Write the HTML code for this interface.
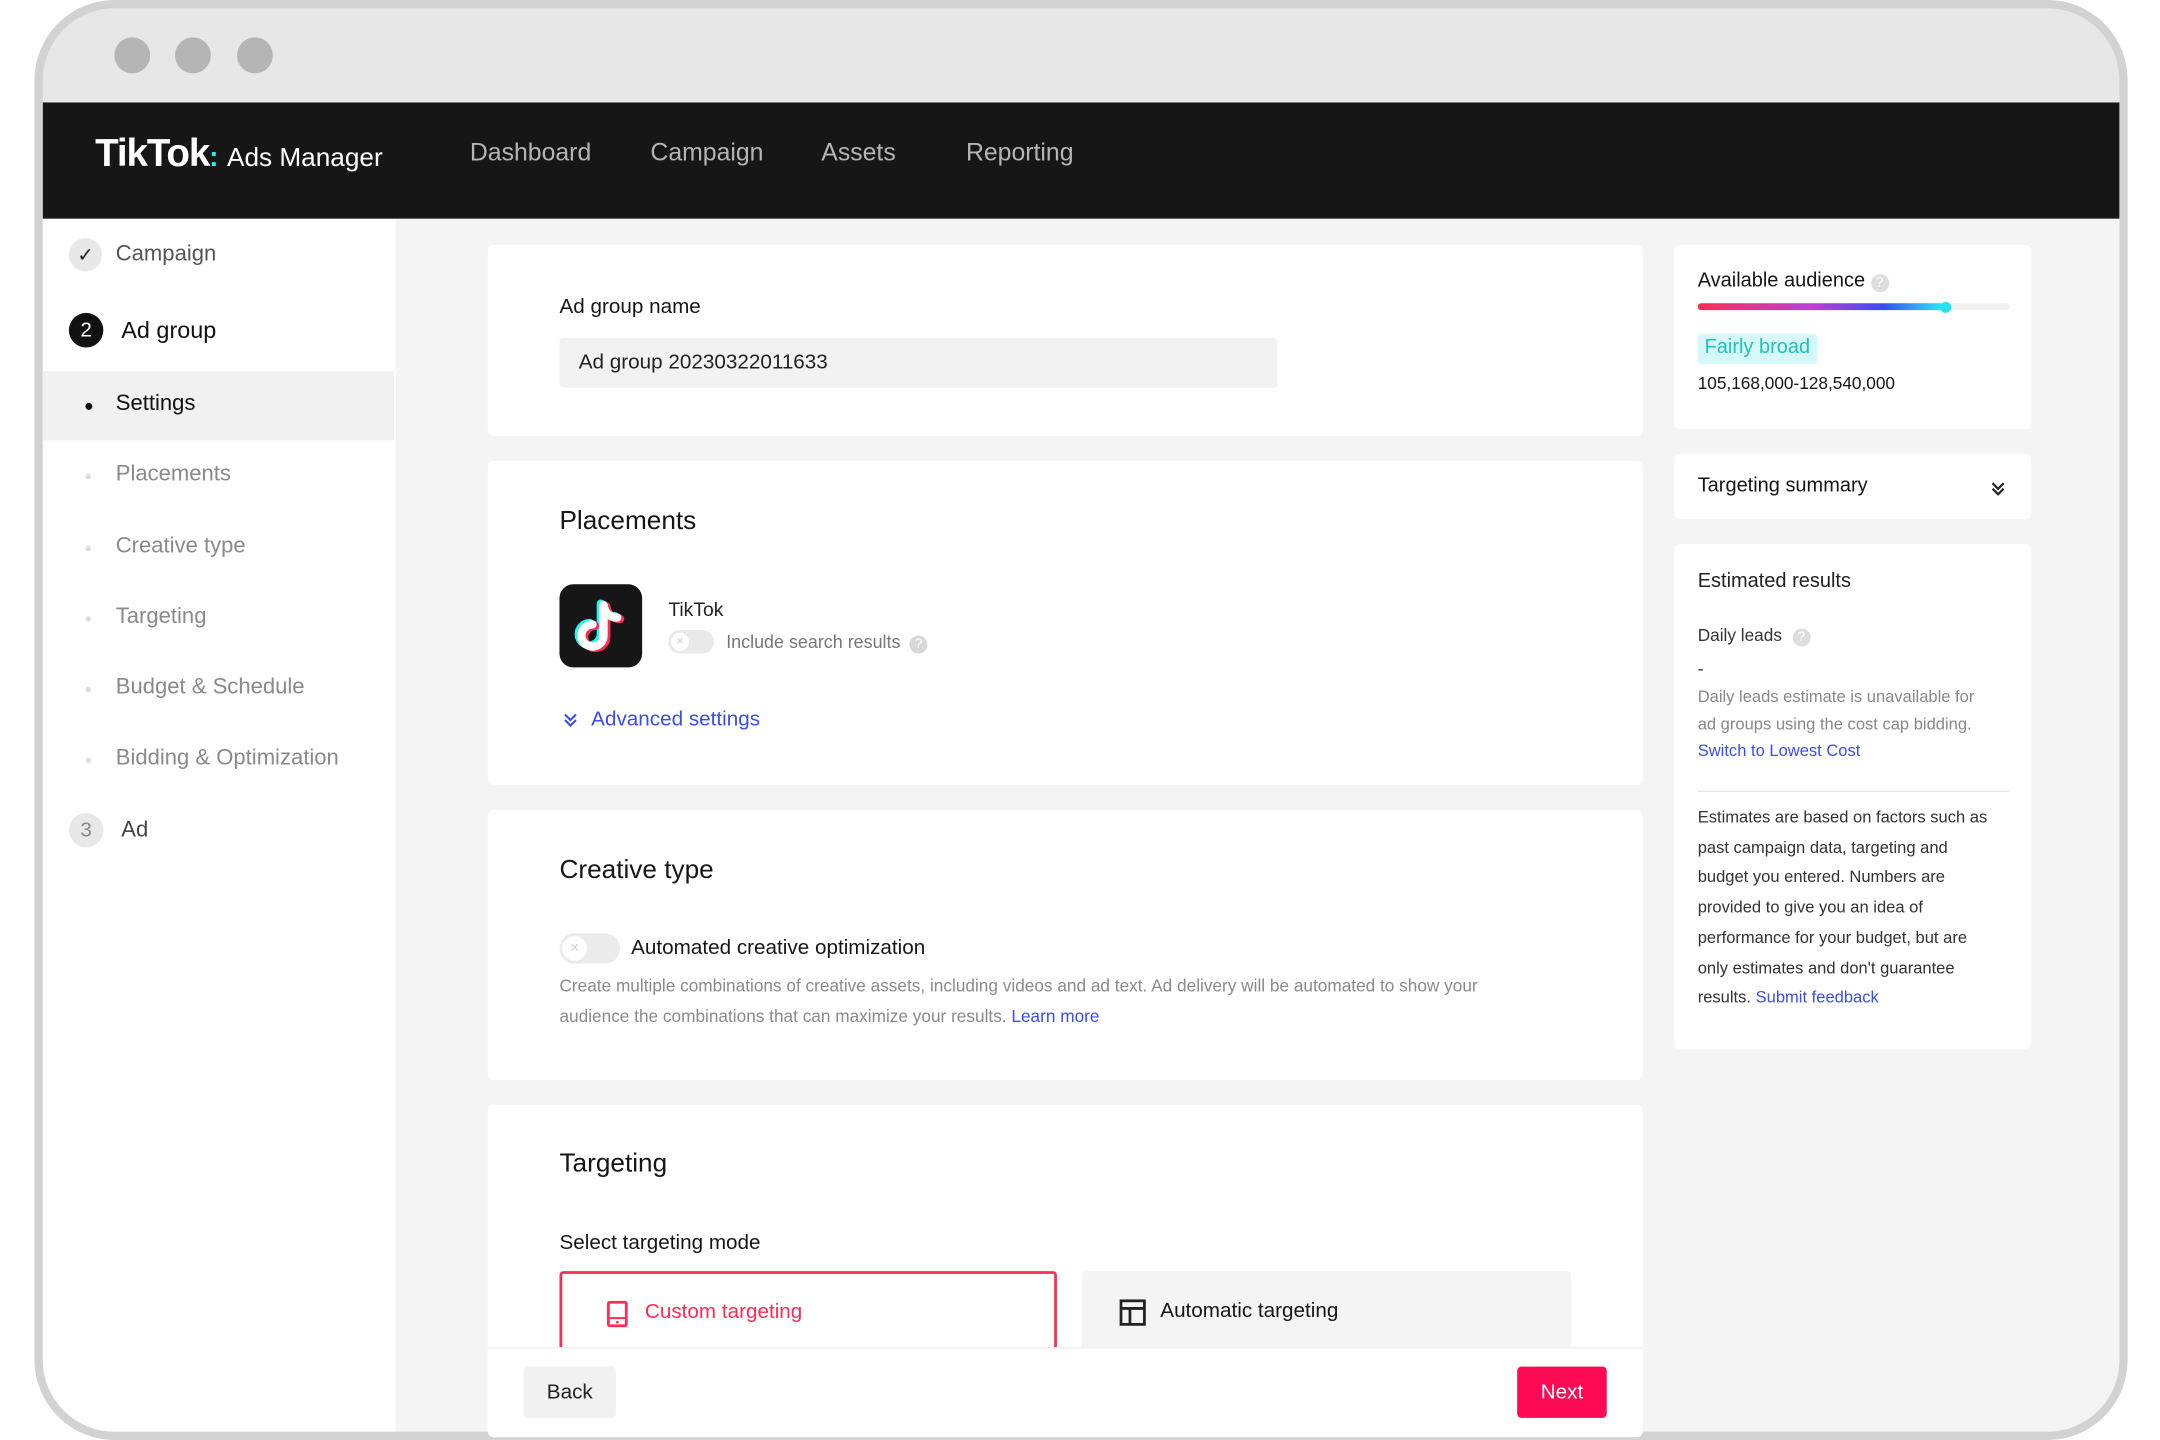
<!DOCTYPE html>
<html><head><meta charset="utf-8"><style>
*{box-sizing:border-box;margin:0;padding:0}
body{width:2160px;height:1440px;overflow:hidden;background:#fff;font-family:"Liberation Sans",sans-serif;}
#w{position:absolute;left:0;top:0;width:1568px;height:1040px;transform:scale(1.378,1.3846);transform-origin:0 0;}
.a{position:absolute;white-space:nowrap}
.card{position:absolute;background:#fff;border-radius:4px}
.nav{position:absolute;top:100px;color:#b5b5b5;font-size:18px}
.si{position:absolute;left:84px;font-size:16px;color:#8a8a8a}
.dot{position:absolute;left:62px;width:4px;height:4px;border-radius:2px;background:#ddd}
</style></head><body><div id="w">
<div class="a" style="left:25px;top:0;width:1519px;height:1040px;border:6px solid #d2d2d2;border-radius:58px;background:#e7e7e7;overflow:hidden">
 <div class="a" style="left:0;top:68px;width:1510px;height:84px;background:#161616"></div>
 <div class="a" style="left:0;top:152px;width:256px;height:900px;background:#fff"></div>
 <div class="a" style="left:256px;top:152px;width:1260px;height:900px;background:#f4f4f4"></div>
</div>
<div class="a" style="left:83px;top:27px;width:26px;height:26px;border-radius:13px;background:#b5b5b5"></div>
<div class="a" style="left:127px;top:27px;width:26px;height:26px;border-radius:13px;background:#b5b5b5"></div>
<div class="a" style="left:172px;top:27px;width:26px;height:26px;border-radius:13px;background:#b5b5b5"></div>
<div class="a" style="left:69px;top:95px;color:#fff;font-size:28px;font-weight:bold;letter-spacing:-0.8px">TikTok<span style="color:#25f4ee;font-size:20px">:</span> <span style="font-weight:normal;font-size:19px;letter-spacing:0">Ads Manager</span></div>
<div class="nav" style="left:341px">Dashboard</div>
<div class="nav" style="left:472px">Campaign</div>
<div class="nav" style="left:596px">Assets</div>
<div class="nav" style="left:701px">Reporting</div>
<div class="a" style="left:50px;top:172px;width:24px;height:24px;border-radius:12px;background:#e8e8e8;font-size:14px;text-align:center;line-height:24px;color:#222">✓</div>
<div class="si" style="top:175px;color:#555">Campaign</div>
<div class="a" style="left:50px;top:226px;width:25px;height:25px;border-radius:13px;background:#111;color:#fff;font-size:15px;text-align:center;line-height:25px">2</div>
<div class="si" style="left:88px;top:229px;color:#111;font-size:17px">Ad group</div>
<div class="a" style="left:31px;top:268px;width:255px;height:50px;background:#f1f1f1"></div>
<div class="a" style="left:62px;top:291px;width:5px;height:5px;border-radius:3px;background:#111"></div>
<div class="si" style="top:283px;color:#111">Settings</div>
<div class="dot" style="top:342px"></div><div class="si" style="top:334px">Placements</div>
<div class="dot" style="top:394px"></div><div class="si" style="top:386px">Creative type</div>
<div class="dot" style="top:445px"></div><div class="si" style="top:437px">Targeting</div>
<div class="dot" style="top:496px"></div><div class="si" style="top:488px">Budget &amp; Schedule</div>
<div class="dot" style="top:547px"></div><div class="si" style="top:539px">Bidding &amp; Optimization</div>
<div class="a" style="left:50px;top:587px;width:25px;height:25px;border-radius:13px;background:#e8e8e8;color:#888;font-size:15px;text-align:center;line-height:25px">3</div>
<div class="si" style="left:88px;top:591px;color:#444">Ad</div>

<div class="card" style="left:354px;top:177px;width:838px;height:138px"></div>
<div class="a" style="left:406px;top:213px;font-size:15px;color:#161616">Ad group name</div>
<div class="a" style="left:406px;top:244px;width:521px;height:36px;background:#f2f2f2;border-radius:3px;font-size:15px;color:#222;padding:9px 14px">Ad group 20230322011633</div>

<div class="card" style="left:354px;top:333px;width:838px;height:234px"></div>
<div class="a" style="left:406px;top:366px;font-size:19px;color:#161616">Placements</div>
<div class="a" style="left:406px;top:422px;width:60px;height:60px;border-radius:10px;background:#161616"><svg width="60" height="60" viewBox="0 0 60 60"><g fill="none" stroke-width="6" stroke-linecap="round"><path d="M32 15v22a8 8 0 1 1-8-8M32 15c1 6 5 9 10 9" stroke="#25f4ee" transform="translate(-2,-1)"/><path d="M32 15v22a8 8 0 1 1-8-8M32 15c1 6 5 9 10 9" stroke="#fe2c55" transform="translate(2,1)"/><path d="M32 15v22a8 8 0 1 1-8-8M32 15c1 6 5 9 10 9" stroke="#fff"/></g></svg></div>
<div class="a" style="left:485px;top:432px;font-size:14px;color:#222">TikTok</div>
<div class="a" style="left:485px;top:455px;width:33px;height:17px;border-radius:9px;background:#e9e9e9"><div style="position:absolute;left:2px;top:2px;width:13px;height:13px;border-radius:7px;background:#fff;font-size:9px;color:#ccc;text-align:center;line-height:13px">×</div></div>
<div class="a" style="left:527px;top:456px;font-size:13px;color:#777">Include search results <span style="display:inline-block;width:13px;height:13px;border-radius:7px;background:#d8d8d8;color:#fff;font-size:10px;text-align:center;line-height:13px;margin-left:3px">?</span></div>
<svg class="a" style="left:408px;top:514px" width="12" height="12" viewBox="0 0 12 12"><path d="M2 2l4 4 4-4M2 6l4 4 4-4" fill="none" stroke="#3a4cf6" stroke-width="1.5"/></svg>
<div class="a" style="left:429px;top:511px;font-size:15px;color:#3a4cf6">Advanced settings</div>

<div class="card" style="left:354px;top:585px;width:838px;height:195px"></div>
<div class="a" style="left:406px;top:618px;font-size:19px;color:#161616">Creative type</div>
<div class="a" style="left:406px;top:674px;width:44px;height:22px;border-radius:11px;background:#ebebeb"><div style="position:absolute;left:2px;top:2px;width:18px;height:18px;border-radius:9px;background:#fff;font-size:11px;color:#ccc;text-align:center;line-height:18px">×</div></div>
<div class="a" style="left:458px;top:676px;font-size:15px;color:#161616">Automated creative optimization</div>
<div class="a" style="left:406px;top:701px;font-size:12.5px;color:#8a8a8a;line-height:22px">Create multiple combinations of creative assets, including videos and ad text. Ad delivery will be automated to show your<br>audience the combinations that can maximize your results. <span style="color:#3a4cf6">Learn more</span></div>

<div class="card" style="left:354px;top:798px;width:838px;height:240px"></div>
<div class="a" style="left:406px;top:830px;font-size:19px;color:#161616">Targeting</div>
<div class="a" style="left:406px;top:889px;font-size:15px;color:#161616">Select targeting mode</div>
<div class="a" style="left:406px;top:918px;width:361px;height:70px;border:2px solid #fe2c55;border-radius:3px"></div>
<svg class="a" style="left:440px;top:939px" width="16" height="20" viewBox="0 0 16 20"><rect x="1.5" y="1.5" width="13" height="17" rx="1" fill="none" stroke="#fe2c55" stroke-width="2"/><path d="M1.5 13h13" stroke="#fe2c55" stroke-width="1.5"/><circle cx="8" cy="16" r="1" fill="#fe2c55"/></svg>
<div class="a" style="left:468px;top:939px;font-size:15px;color:#fe2c55">Custom targeting</div>
<div class="a" style="left:785px;top:918px;width:355px;height:70px;background:#f4f4f4;border-radius:3px"></div>
<svg class="a" style="left:812px;top:938px" width="20" height="20" viewBox="0 0 20 20"><rect x="1.5" y="1.5" width="17" height="17" fill="none" stroke="#222" stroke-width="2"/><path d="M1.5 7h17M8 7v11.5" stroke="#222" stroke-width="2"/></svg>
<div class="a" style="left:842px;top:938px;font-size:15px;color:#161616">Automatic targeting</div>
<div class="a" style="left:354px;top:973px;width:838px;height:61px;background:#fff;border-top:1px solid #eee"></div>
<div class="a" style="left:380px;top:987px;width:67px;height:37px;background:#f1f1f1;border-radius:3px;font-size:15px;color:#222;text-align:center;line-height:37px">Back</div>
<div class="a" style="left:1101px;top:987px;width:65px;height:37px;background:#fe0a54;border-radius:3px;font-size:15px;color:#fff;text-align:center;line-height:37px">Next</div>

<div class="card" style="left:1215px;top:177px;width:259px;height:133px"></div>
<div class="a" style="left:1232px;top:195px;font-size:14.5px;color:#161616">Available audience <span style="display:inline-block;width:13px;height:13px;border-radius:7px;background:#ddd;color:#fff;font-size:10px;text-align:center;line-height:13px">?</span></div>
<div class="a" style="left:1232px;top:219px;width:226px;height:5px;border-radius:3px;background:#f0f0f0"></div>
<div class="a" style="left:1232px;top:219px;width:180px;height:5px;border-radius:3px;background:linear-gradient(90deg,#fe2c55,#c040d0 45%,#3a4cf6 75%,#25f4ee)"></div>
<div class="a" style="left:1408px;top:218px;width:8px;height:8px;border-radius:4px;background:#25e4ee"></div>
<div class="a" style="left:1232px;top:241px;width:87px;height:22px;background:#d5f8f8;border-radius:3px;font-size:14.5px;color:#21bfbf;padding:2px 5px">Fairly broad</div>
<div class="a" style="left:1232px;top:270px;font-size:12.5px;color:#161616">105,168,000-128,540,000</div>
<div class="card" style="left:1215px;top:328px;width:259px;height:47px"></div>
<div class="a" style="left:1232px;top:343px;font-size:14.5px;color:#161616">Targeting summary</div>
<svg class="a" style="left:1444px;top:347px" width="12" height="12" viewBox="0 0 12 12"><path d="M2 2l4 4 4-4M2 6l4 4 4-4" fill="none" stroke="#222" stroke-width="1.6"/></svg>
<div class="card" style="left:1215px;top:393px;width:259px;height:365px"></div>
<div class="a" style="left:1232px;top:412px;font-size:14.5px;color:#222">Estimated results</div>
<div class="a" style="left:1232px;top:452px;font-size:12.5px;color:#333">Daily leads <span style="display:inline-block;width:13px;height:13px;border-radius:7px;background:#ddd;color:#fff;font-size:10px;text-align:center;line-height:13px;margin-left:4px">?</span></div>
<div class="a" style="left:1232px;top:476px;font-size:12.5px;color:#333">-</div>
<div class="a" style="left:1232px;top:494px;font-size:12px;color:#888;line-height:19.5px">Daily leads estimate is unavailable for<br>ad groups using the cost cap bidding.<br><span style="color:#3a4cf6">Switch to Lowest Cost</span></div>
<div class="a" style="left:1232px;top:571px;width:226px;height:1px;background:#e6e6e6"></div>
<div class="a" style="left:1232px;top:580px;font-size:12px;color:#333;line-height:21.7px">Estimates are based on factors such as<br>past campaign data, targeting and<br>budget you entered. Numbers are<br>provided to give you an idea of<br>performance for your budget, but are<br>only estimates and don't guarantee<br>results. <span style="color:#3a4cf6">Submit feedback</span></div>
</div></body></html>
